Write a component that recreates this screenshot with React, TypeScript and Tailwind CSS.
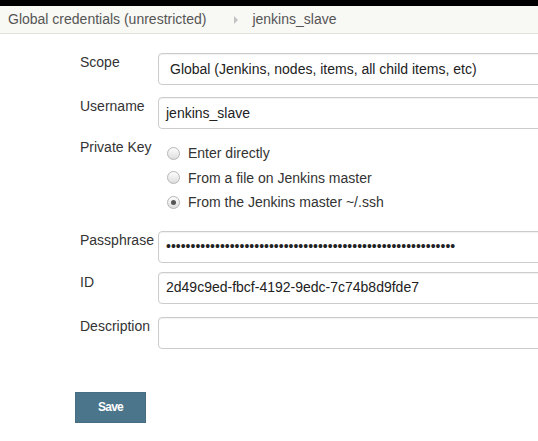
import React from "react";

const font = { fontFamily: '"Liberation Sans", Arial, sans-serif' };

function Radio({ checked, label }: { checked?: boolean; label: string }) {
  return (
    <div className="flex h-[24.5px] items-center">
      <span className="flex h-[13px] w-[13px] items-center justify-center rounded-full border border-[#b5b5b5] bg-gradient-to-b from-[#fdfdfd] to-[#dedede]">
        {checked && <span className="h-[5px] w-[5px] rounded-full bg-[#555]" />}
      </span>
      <span className="ml-[8px] text-[14px] leading-[16px] text-[#333]">{label}</span>
    </div>
  );
}

function Field({
  label,
  value,
  select,
  className = "",
  labelPad = "pt-[1px]",
}: {
  label: string;
  value?: string;
  select?: boolean;
  className?: string;
  labelPad?: string;
}) {
  return (
    <div className={`flex ${className}`}>
      <div className={`w-[78px] shrink-0 text-[14px] leading-[16px] text-[#333] ${labelPad}`}>{label}</div>
      <div
        className={`flex h-[32px] flex-1 items-center overflow-hidden whitespace-nowrap rounded-[4px] border border-[#cccccc] text-[14px] text-[#222] shadow-[inset_0_1px_1px_rgba(0,0,0,0.06)] ${
          select ? "pl-[11px]" : "pl-[7px]"
        }`}
      >
        {value}
      </div>
    </div>
  );
}

export default function App() {
  const dots = "•".repeat(59);
  return (
    <div className="h-[441px] w-[538px] overflow-hidden bg-white" style={font}>
      <div className="h-[6px] bg-black" />
      <div className="flex h-[28px] items-center border-b border-[#e2e2dc] bg-[#f8f8f4] pl-[8px] text-[14px] text-[#555]">
        <span>Global credentials (unrestricted)</span>
        <svg width="4" height="8" viewBox="0 0 4 8" className="ml-[28px] mr-[14px]">
          <path d="M0 0 L4 4 L0 8 Z" fill="#c2c2c2" />
        </svg>
        <span>jenkins_slave</span>
      </div>
      <div className="mr-[-10px] pl-[80px] pt-[19px]">
        <Field label="Scope" value="Global (Jenkins, nodes, items, all child items, etc)" select />
        <Field label="Username" value="jenkins_slave" className="mt-[12px]" />
        <div className="mt-[12px] flex">
          <div className="-mt-[2px] w-[87px] shrink-0 text-[14px] leading-[16px] text-[#333]">Private Key</div>
          <div className="flex flex-col">
            <Radio label="Enter directly" />
            <Radio label="From a file on Jenkins master" />
            <Radio checked label="From the Jenkins master ~/.ssh" />
          </div>
        </div>
        <Field label="Passphrase" value={dots} className="mt-[16px]" />
        <Field label="ID" value="2d49c9ed-fbcf-4192-9edc-7c74b8d9fde7" className="mt-[9px]" labelPad="pt-[2px]" />
        <Field label="Description" className="mt-[13px]" />
      </div>
      <div className="pl-[75px] pt-[43px]">
        <button className="h-[31px] w-[71px] border border-[#466d82] bg-[#4b758b] text-[12px] font-bold tracking-[-0.8px] text-white">
          Save
        </button>
      </div>
    </div>
  );
}
